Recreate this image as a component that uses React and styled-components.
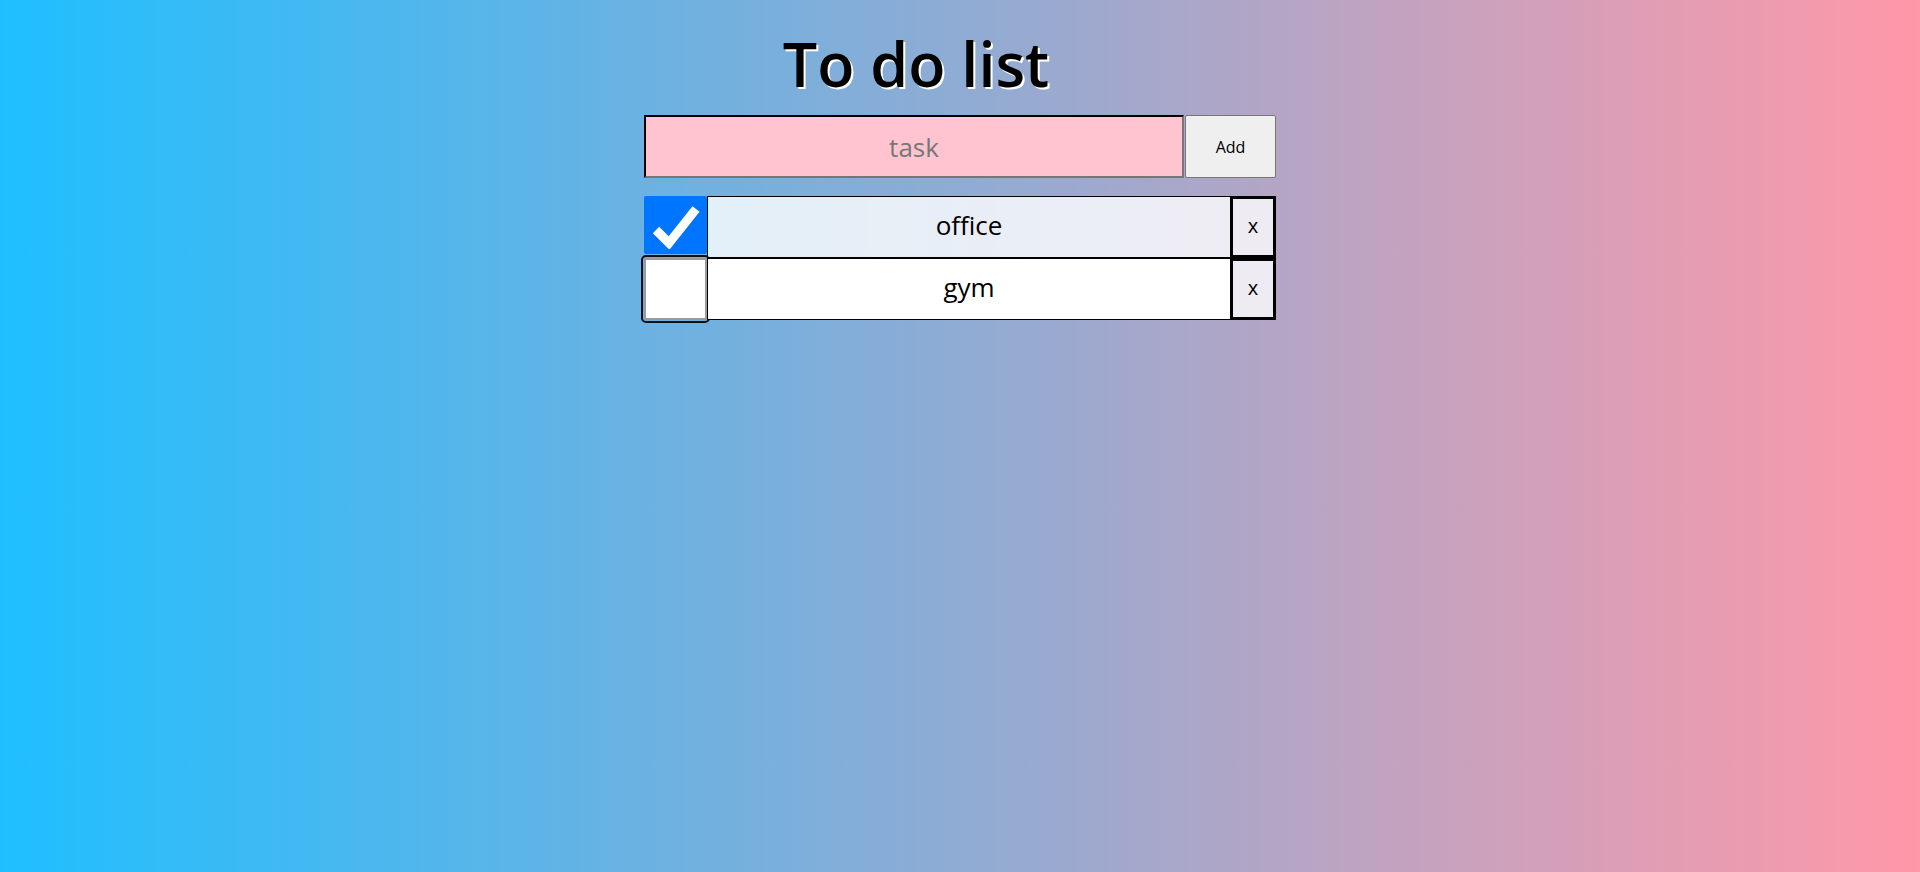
import React, { useState } from "react"
import styled, { createGlobalStyle } from "styled-components"

const GlobalStyle = createGlobalStyle`
  html, body {
    margin: 0;
    padding: 0;
  }
  body {
    font-family: "Open Sans", "Liberation Sans", sans-serif;
  }
`

export default function App() {
  const [todos, setTodos] = useState([
    { id: 1, text: "office", done: true },
    { id: 2, text: "gym", done: false },
  ])

  const toggle = (id) =>
    setTodos(todos.map((t) => (t.id === id ? { ...t, done: !t.done } : t)))

  return (
    <Page>
      <GlobalStyle />
      <Wrapper>
        <Title>To do list</Title>
        <Form onSubmit={(e) => e.preventDefault()}>
          <TaskInput placeholder="task" />
          <AddButton type="submit">Add</AddButton>
        </Form>
        <List>
          {todos.map((todo, i) => (
            <Row key={todo.id}>
              <CheckBox
                $checked={todo.done}
                $focused={i === 1}
                onClick={() => toggle(todo.id)}
              >
                {todo.done && (
                  <svg width="48" height="48" viewBox="0 0 48 48">
                    <path
                      d="M4 29 L17 42 L44 8"
                      fill="none"
                      stroke="white"
                      strokeWidth="9"
                    />
                  </svg>
                )}
              </CheckBox>
              <TaskText $done={todo.done}>{todo.text}</TaskText>
              <DeleteButton>x</DeleteButton>
            </Row>
          ))}
        </List>
      </Wrapper>
    </Page>
  )
}

const Page = styled.div`
  min-height: 100vh;
  background: linear-gradient(to right, #1fbfff, #ff98a8);
  display: flex;
  justify-content: center;
`

const Wrapper = styled.div`
  width: 632px;
  display: flex;
  flex-direction: column;
`

const Title = styled.h1`
  margin: 22px 0 0;
  height: 93px;
  padding-right: 88px;
  text-align: center;
  font-size: 61px;
  font-weight: 600;
  line-height: 84px;
  color: black;
  text-shadow: 2px 2px 0 white;
`

const Form = styled.form`
  display: flex;
  height: 63px;
`

const TaskInput = styled.input`
  width: 540px;
  box-sizing: border-box;
  background: #ffc4cf;
  border: 2px inset #767676;
  border-top-color: #333;
  border-left-color: #333;
  font-family: inherit;
  font-size: 26px;
  font-weight: 500;
  text-align: center;
  outline: none;
  &::placeholder {
    color: #777;
  }
`

const AddButton = styled.button`
  width: 91px;
  margin-left: 1px;
  background: #efefef;
  border: 1px solid #767676;
  border-radius: 2px;
  font-family: inherit;
  font-size: 16px;
  font-weight: 500;
  color: black;
`

const List = styled.div`
  margin-top: 18px;
  display: flex;
  flex-direction: column;
`

const Row = styled.div`
  display: flex;
  height: 62px;
  align-items: stretch;
`

const CheckBox = styled.div`
  width: 63px;
  box-sizing: border-box;
  display: flex;
  align-items: center;
  justify-content: center;
  background: ${(p) => (p.$checked ? "#0075ff" : "white")};
  border: ${(p) => (p.$checked ? "none" : "2px solid #9a9a9a")};
  border-radius: 2px;
  margin-bottom: ${(p) => (p.$checked ? "4px" : "0")};
  outline: ${(p) => (p.$focused ? "2px solid #101010" : "none")};
  outline-offset: 1px;
  cursor: pointer;
`

const TaskText = styled.div`
  flex: 1;
  box-sizing: border-box;
  display: flex;
  align-items: center;
  justify-content: center;
  padding-bottom: 4px;
  border: 1px solid black;
  border-right: none;
  background: ${(p) => (p.$done ? "rgba(255, 255, 255, 0.8)" : "white")};
  font-size: 26px;
  font-weight: 500;
  color: black;
`

const DeleteButton = styled.button`
  width: 46px;
  box-sizing: border-box;
  background: rgba(255, 255, 255, 0.78);
  border: 3px solid black;
  font-family: inherit;
  font-size: 20px;
  padding: 0 0 4px;
`
